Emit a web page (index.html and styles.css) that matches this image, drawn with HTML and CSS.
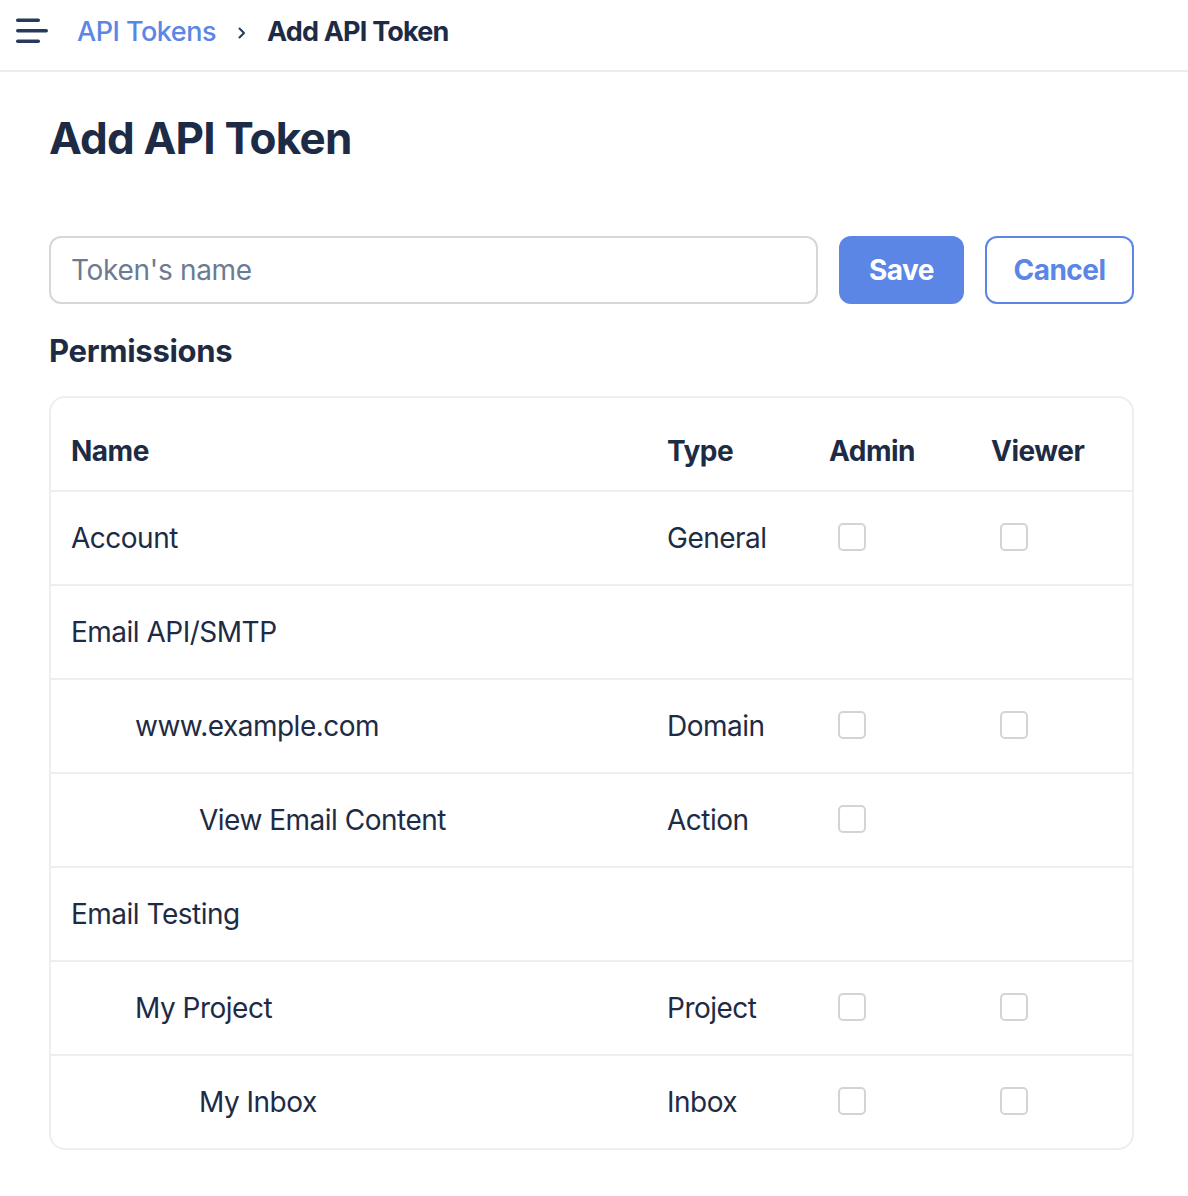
FILE: index.html
```html
<!DOCTYPE html>
<html lang="en">
<head>
<meta charset="utf-8">
<title>Add API Token</title>
<link rel="stylesheet" href="styles.css">
</head>
<body>
<header class="topbar">
  <svg class="menu-icon" width="34" height="26" viewBox="0 0 34 26" aria-hidden="true">
    <rect x="1" y="0.5" width="24" height="3.4" rx="1.7"/>
    <rect x="1" y="11" width="32" height="3.4" rx="1.7"/>
    <rect x="1" y="21.5" width="24" height="3.4" rx="1.7"/>
  </svg>
  <nav class="crumbs">
    <a class="crumb-link" href="#">API Tokens</a>
    <svg class="crumb-sep" width="8" height="12" viewBox="0 0 8 12" aria-hidden="true">
      <path d="M1.5 1.5 L6 6 L1.5 10.5"/>
    </svg>
    <span class="crumb-current">Add API Token</span>
  </nav>
</header>

<main class="page">
  <h1 class="title">Add API Token</h1>

  <form class="token-form" onsubmit="return false">
    <input class="token-input" type="text" placeholder="Token's name">
    <button class="btn btn-primary" type="submit">Save</button>
    <button class="btn btn-outline" type="button">Cancel</button>
  </form>

  <h2 class="subtitle">Permissions</h2>

  <div class="perm-table">
    <div class="row head">
      <div class="cell name">Name</div>
      <div class="cell">Type</div>
      <div class="cell">Admin</div>
      <div class="cell">Viewer</div>
    </div>
    <div class="row">
      <div class="cell name">Account</div>
      <div class="cell">General</div>
      <div class="cell"><span class="check"></span></div>
      <div class="cell"><span class="check"></span></div>
    </div>
    <div class="row">
      <div class="cell name">Email API/SMTP</div>
      <div class="cell"></div>
      <div class="cell"></div>
      <div class="cell"></div>
    </div>
    <div class="row">
      <div class="cell name lvl1">www.example.com</div>
      <div class="cell">Domain</div>
      <div class="cell"><span class="check"></span></div>
      <div class="cell"><span class="check"></span></div>
    </div>
    <div class="row">
      <div class="cell name lvl2">View Email Content</div>
      <div class="cell">Action</div>
      <div class="cell"><span class="check"></span></div>
      <div class="cell"></div>
    </div>
    <div class="row">
      <div class="cell name">Email Testing</div>
      <div class="cell"></div>
      <div class="cell"></div>
      <div class="cell"></div>
    </div>
    <div class="row">
      <div class="cell name lvl1">My Project</div>
      <div class="cell">Project</div>
      <div class="cell"><span class="check"></span></div>
      <div class="cell"><span class="check"></span></div>
    </div>
    <div class="row last">
      <div class="cell name lvl2">My Inbox</div>
      <div class="cell">Inbox</div>
      <div class="cell"><span class="check"></span></div>
      <div class="cell"><span class="check"></span></div>
    </div>
  </div>
</main>
</body>
</html>
```

FILE: styles.css
```css
* { box-sizing: border-box; }

html, body {
  margin: 0;
  padding: 0;
  background: #ffffff;
}

body {
  font-family: Inter, "Noto Sans", "Liberation Sans", sans-serif;
  color: #1e2b45;
  font-size: 28px;
  letter-spacing: -0.5px;
}

/* Top bar */
.topbar {
  display: flex;
  align-items: center;
  height: 72px;
  padding: 0 0 6px 15px;
  border-bottom: 2px solid #ececec;
}

.menu-icon {
  display: block;
  margin-top: -2px;
  fill: #253a5e;
  flex: none;
}

.crumbs {
  display: flex;
  align-items: center;
  margin-left: 28px;
  font-size: 27px;
  line-height: 34px;
}

.crumb-link {
  color: #5b86e5;
  text-decoration: none;
  font-weight: 500;
}

.crumb-sep {
  display: block;
  margin: 2px 21px 0 22px;
  fill: none;
  stroke: #253a5e;
  stroke-width: 2;
  stroke-linecap: round;
  stroke-linejoin: round;
}

.crumb-current {
  font-weight: 700;
  letter-spacing: -0.8px;
  color: #1e2b45;
}

/* Page */
.page {
  width: 1085px;
  margin-left: 49px;
}

.title {
  margin: 38px 0 0;
  font-size: 44px;
  line-height: 56px;
  font-weight: 700;
  letter-spacing: -0.8px;
  color: #1e2b45;
}

.token-form {
  display: flex;
  gap: 21px;
  margin-top: 70px;
  height: 68px;
}

.token-input {
  flex: 1;
  min-width: 0;
  height: 68px;
  border: 2px solid #d6d6db;
  border-radius: 12px;
  padding: 0 20px;
  font-family: inherit;
  font-size: 28px;
  letter-spacing: -0.3px;
  color: #1e2b45;
  outline: none;
  background: #fff;
}

.token-input::placeholder {
  color: #6b7b93;
}

.btn {
  height: 68px;
  border-radius: 12px;
  font-family: inherit;
  font-size: 28px;
  font-weight: 700;
  letter-spacing: -0.5px;
  cursor: pointer;
  padding: 0;
}

.btn-primary {
  width: 125px;
  background: #5b86e5;
  border: 2px solid #5b86e5;
  color: #ffffff;
}

.btn-outline {
  width: 149px;
  background: #ffffff;
  border: 2px solid #5b86e5;
  color: #5b86e5;
}

.subtitle {
  margin: 27px 0 0;
  font-size: 31px;
  line-height: 40px;
  font-weight: 700;
  letter-spacing: -0.3px;
  color: #1e2b45;
}

/* Permissions table */
.perm-table {
  margin-top: 25px;
  border: 2px solid #eeeeee;
  border-radius: 16px;
  overflow: hidden;
}

.row {
  display: grid;
  grid-template-columns: 1fr 162px 162px 163px;
  height: 94px;
  border-bottom: 2px solid #eeeeee;
}

.row.last {
  height: 92px;
  border-bottom: none;
}

.cell {
  padding: 29px 0 0 22px;
  line-height: 34px;
  white-space: nowrap;
}

.row.head .cell {
  padding-top: 36px;
  font-weight: 700;
}

.cell.name { padding-left: 20px; }
.cell.lvl1 { padding-left: 84px; }
.cell.lvl2 { padding-left: 148px; }

.check {
  display: block;
  width: 28px;
  height: 28px;
  margin: 2px 0 0 9px;
  border: 2px solid #d4d4d8;
  border-radius: 5px;
  background: #fff;
}
```
